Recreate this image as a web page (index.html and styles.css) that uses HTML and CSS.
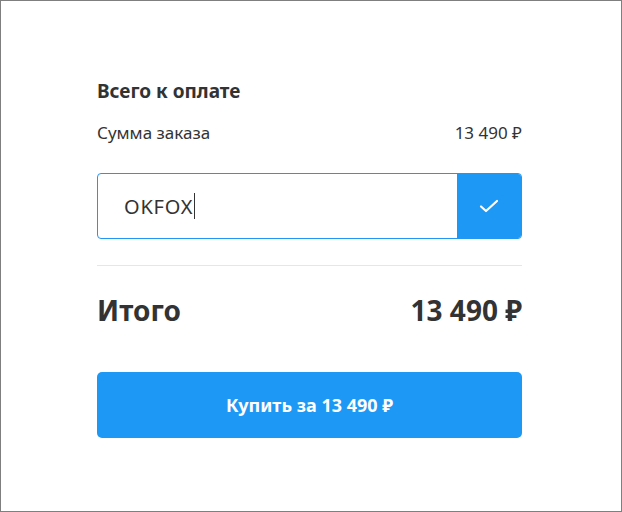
FILE: index.html
```html
<!DOCTYPE html>
<html lang="ru">
<head>
<meta charset="utf-8">
<link rel="stylesheet" href="styles.css">
</head>
<body>
<div class="frame">
  <div class="summary">
    <h2 class="title">Всего к оплате</h2>
    <div class="row">
      <span>Сумма заказа</span>
      <span>13 490 ₽</span>
    </div>
    <div class="promo">
      <div class="promo-field"><span class="promo-text">OKFOX</span><span class="caret"></span></div>
      <div class="promo-apply">
        <svg width="20" height="14" viewBox="0 0 20 14"><path d="M2 7.5 L7 12 L18 2" fill="none" stroke="#fff" stroke-width="2.2" stroke-linecap="round" stroke-linejoin="round"/></svg>
      </div>
    </div>
    <div class="divider"></div>
    <div class="total">
      <span>Итого</span>
      <span>13 490 ₽</span>
    </div>
    <button class="buy">Купить за 13 490 ₽</button>
  </div>
</div>
</body>
</html>
```
FILE: styles.css
```css
* { box-sizing: border-box; }
html, body { margin: 0; padding: 0; }
body {
  font-family: "Noto Sans", "Open Sans", sans-serif;
  color: #333;
  background: #fff;
}
.frame {
  width: 622px;
  height: 512px;
  border: 1px solid #7f7f7f;
  padding: 77px 99px 0 96px;
}
.summary {
  display: flex;
  flex-direction: column;
}
.title {
  margin: 0;
  font-size: 19px;
  font-weight: 700;
  line-height: 26px;
}
.row {
  display: flex;
  justify-content: space-between;
  margin-top: 17px;
  font-size: 17px;
  line-height: 24px;
}
.promo {
  display: flex;
  margin-top: 28px;
  height: 66px;
  border: 1px solid #2196f3;
  border-radius: 4px;
  overflow: hidden;
}
.promo-field {
  flex: 1;
  display: flex;
  align-items: center;
  padding-left: 26px;
  font-size: 20px;
}
.promo-text { letter-spacing: 0.8px; }
.caret {
  display: inline-block;
  width: 1px;
  height: 26px;
  background: #333;
  margin-left: 1px;
}
.promo-apply {
  width: 64px;
  background: #1e98f5;
  display: flex;
  align-items: center;
  justify-content: center;
}
.divider {
  height: 1px;
  background: #e6e6e6;
  margin-top: 26px;
}
.total {
  display: flex;
  justify-content: space-between;
  margin-top: 26px;
  font-size: 28px;
  font-weight: 700;
  line-height: 36px;
}
.buy {
  margin-top: 44px;
  height: 66px;
  border: none;
  border-radius: 5px;
  background: #1e98f5;
  color: #fff;
  font-family: inherit;
  font-size: 18px;
  font-weight: 700;
}
```
